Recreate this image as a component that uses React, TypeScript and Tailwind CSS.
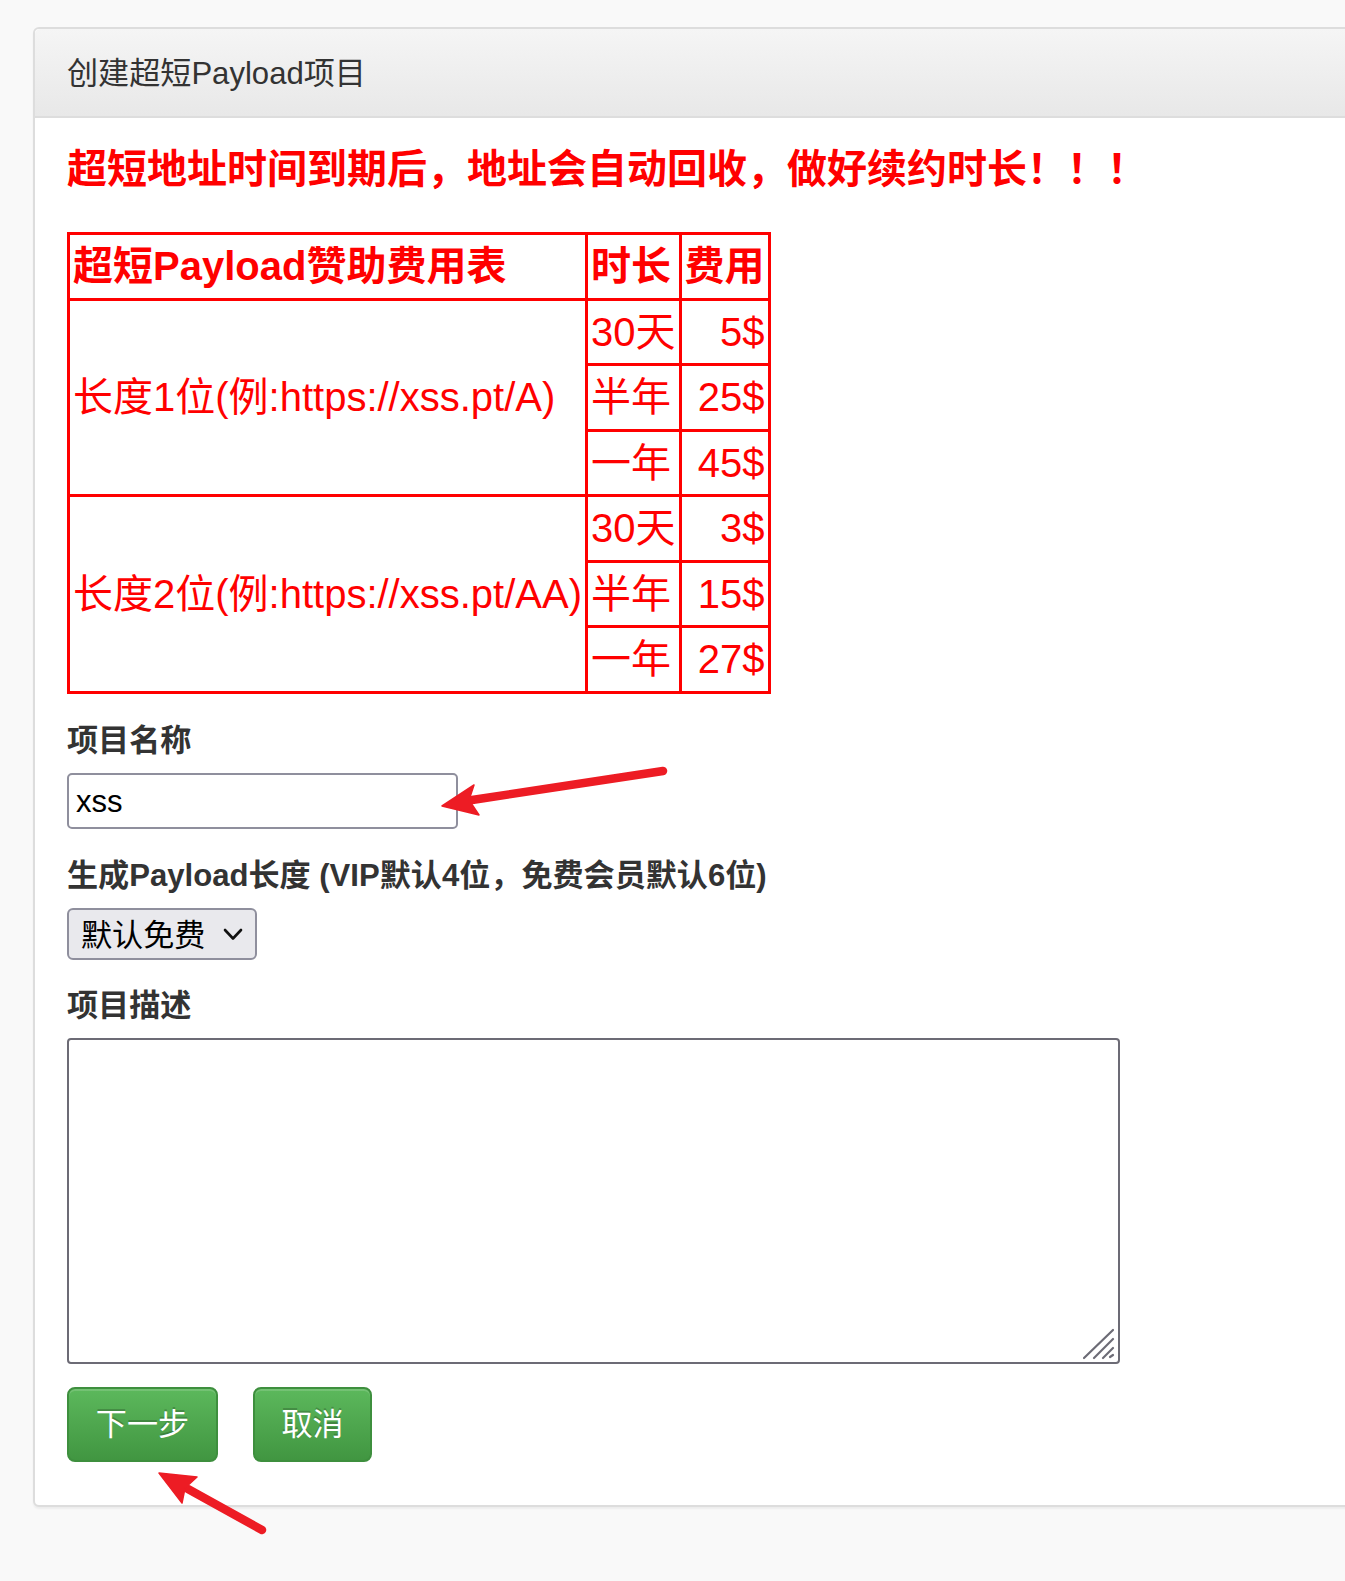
import React from "react";

// pricing rows of the short-payload table
const tiers = [
  {
    label: "长度1位(例:https://xss.pt/A)",
    items: [
      ["30天", "5$"],
      ["半年", "25$"],
      ["一年", "45$"],
    ],
  },
  {
    label: "长度2位(例:https://xss.pt/AA)",
    items: [
      ["30天", "3$"],
      ["半年", "15$"],
      ["一年", "27$"],
    ],
  },
];

const CELL =
  "border-[3px] border-[#ff0000] px-[3px] py-0 leading-[62.5px] whitespace-nowrap align-middle";

function PriceTable() {
  return (
    <table className="mt-[41px] border-collapse border-[3px] border-[#ff0000] text-[40px] text-[#ff0000]">
      <thead>
        <tr>
          <th className={`${CELL} text-left font-bold`}>超短Payload赞助费用表</th>
          <th className={`${CELL} text-left font-bold`}>时长</th>
          <th className={`${CELL} text-left font-bold`}>费用</th>
        </tr>
      </thead>
      <tbody>
        {tiers.map((t) =>
          t.items.map(([span, fee], i) => (
            <tr key={t.label + span}>
              {i === 0 && (
                <td rowSpan={3} className={`${CELL} text-left`}>
                  {t.label}
                </td>
              )}
              <td className={`${CELL} text-left`}>{span}</td>
              <td className={`${CELL} text-right`}>{fee}</td>
            </tr>
          )),
        )}
      </tbody>
    </table>
  );
}

function Label({ children }: { children: React.ReactNode }) {
  return (
    <label className="mb-[10px] block text-[31.1px] font-bold leading-[44px] text-[#333333]">
      {children}
    </label>
  );
}

function Arrows() {
  return (
    <svg
      className="pointer-events-none absolute left-0 top-0"
      width="1345"
      height="1581"
      viewBox="0 0 1345 1581"
    >
      <g fill="#ed1c24" stroke="#ed1c24" strokeLinecap="round" strokeLinejoin="round">
        <line x1="663" y1="771" x2="472" y2="800" strokeWidth="8.5" />
        <polygon points="442,806 474,785 469,800 479,815" strokeWidth="1.5" />
        <line x1="262" y1="1530" x2="188" y2="1489" strokeWidth="8.5" />
        <polygon points="159,1473 197,1477 185,1488 182,1503" strokeWidth="1.5" />
      </g>
    </svg>
  );
}

export default function App() {
  return (
    <div className="relative min-h-[1581px] w-full overflow-hidden bg-[#f9f9f9] pt-[27px] font-['Liberation_Sans','Noto_Sans_CJK_SC',sans-serif]">
      <div className="ml-[33px] w-[1360px] rounded-[6px] border-2 border-[#dddddd] bg-white shadow-[0_2px_2px_rgba(0,0,0,0.05)]">
        <div className="flex h-[89px] items-center rounded-t-[5px] border-b-2 border-[#dddddd] bg-linear-to-b from-[#f5f5f5] to-[#e8e8e8] px-[32px] pt-[3px] text-[31.1px] text-[#333333]">
          创建超短Payload项目
        </div>

        <div className="px-[32px] pb-[43px] pt-[29px]">
          <h3 className="text-[40px] font-bold leading-[44px] text-[#ff0000]">
            超短地址时间到期后，地址会自动回收，做好续约时长！！！
          </h3>

          <PriceTable />

          <div className="mt-[25px]">
            <Label>项目名称</Label>
            <input
              defaultValue="xss"
              className="h-[56px] w-[391px] rounded-[5px] border-2 border-[#8f8f9d] bg-white px-[7px] pt-[2px] text-[31.1px] text-black outline-none"
            />
          </div>

          <div className="mt-[25px]">
            <Label>生成Payload长度 (VIP默认4位，免费会员默认6位)</Label>
            <div className="flex h-[52px] w-[190px] items-center justify-between rounded-[6px] border-2 border-[#8f8f9d] bg-[#e9e9ed] px-[12px] text-[31.1px] text-black">
              <span className="pt-[5px]">默认免费</span>
              <svg width="20" height="13" viewBox="0 0 20 13" className="mt-[2px]">
                <polyline
                  points="2,2 10,10.5 18,2"
                  fill="none"
                  stroke="#111111"
                  strokeWidth="2.6"
                  strokeLinecap="round"
                  strokeLinejoin="round"
                />
              </svg>
            </div>
          </div>

          <div className="mt-[24px]">
            <Label>项目描述</Label>
            <div className="relative h-[326px] w-[1053px]">
              <textarea className="block h-full w-full resize-none rounded-[4px] border-2 border-[#6c6b75] bg-white text-[31.1px] outline-none" />
              <svg
                className="pointer-events-none absolute bottom-[4px] right-[4px]"
                width="34"
                height="32"
                viewBox="0 0 34 32"
              >
                <g stroke="#6c6b75" strokeWidth="2.2" strokeLinecap="round">
                  <line x1="2" y1="30" x2="31" y2="2" />
                  <line x1="12" y1="30" x2="31" y2="11" />
                  <line x1="21" y1="30" x2="31" y2="20" />
                  <line x1="28" y1="29" x2="31" y2="27" />
                </g>
              </svg>
            </div>
          </div>

          <div className="mt-[23px] flex gap-[35px]">
            <button className="flex h-[75px] w-[151px] items-center justify-center rounded-[8px] border-2 border-[#3e8f3e] bg-linear-to-b from-[#5cb85c] to-[#419641] pt-[3px] text-[31.1px] text-white shadow-[inset_0_2px_0_rgba(255,255,255,0.15)] [text-shadow:0_-2px_0_rgba(0,0,0,0.2)]">
              下一步
            </button>
            <button className="flex h-[75px] w-[119px] items-center justify-center rounded-[8px] border-2 border-[#3e8f3e] bg-linear-to-b from-[#5cb85c] to-[#419641] pt-[3px] text-[31.1px] text-white shadow-[inset_0_2px_0_rgba(255,255,255,0.15)] [text-shadow:0_-2px_0_rgba(0,0,0,0.2)]">
              取消
            </button>
          </div>
        </div>
      </div>
      <Arrows />
    </div>
  );
}
